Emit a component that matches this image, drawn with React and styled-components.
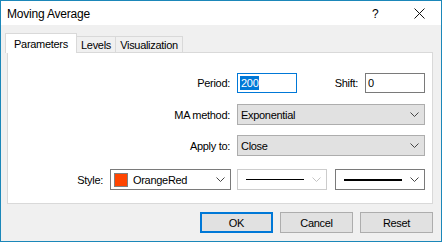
import React from "react";
import styled, { createGlobalStyle } from "styled-components";

const GlobalStyle = createGlobalStyle`
  html, body {
    margin: 0;
    padding: 0;
    background: #ffffff;
  }
  body {
    font-family: "Liberation Sans", Arial, sans-serif;
    font-size: 11px;
    color: #000000;
  }
`;

function Chevron({ disabled }) {
  return (
    <svg width="9" height="5" viewBox="0 0 9 5">
      <polyline
        points="0.5,0.5 4.5,4.5 8.5,0.5"
        fill="none"
        stroke={disabled ? "#c4c4c4" : "#444444"}
        strokeWidth="1"
      />
    </svg>
  );
}

function CloseGlyph() {
  return (
    <svg width="11" height="11" viewBox="0 0 11 11">
      <path d="M0.5 0.5 L10.5 10.5 M10.5 0.5 L0.5 10.5" stroke="#111" strokeWidth="1" />
    </svg>
  );
}

export default function App() {
  return (
    <>
      <GlobalStyle />
      <Window>
        <TitleBar>
          <Title>Moving Average</Title>
          <Help>?</Help>
          <CloseBox>
            <CloseGlyph />
          </CloseBox>
        </TitleBar>
        <Body>
          <Tabs>
            <Tab $active $w={72}>Parameters</Tab>
            <Tab $w={40}>Levels</Tab>
            <Tab $w={68}>Visualization</Tab>
          </Tabs>
          <Panel>
            <Row $top={0}>
              <Label>Period:</Label>
              <TextField $focused>
                <Selected>200</Selected>
              </TextField>
              <Label $w={61}>Shift:</Label>
              <TextField>0</TextField>
            </Row>
            <Row $top={11}>
              <Label>MA method:</Label>
              <Select $w={188}>
                <span>Exponential</span>
                <Chevron />
              </Select>
            </Row>
            <Row $top={10}>
              <Label>Apply to:</Label>
              <Select $w={188}>
                <span>Close</span>
                <Chevron />
              </Select>
            </Row>
            <Row $top={13}>
              <Label>Style:</Label>
              <WhiteSelect $w={121} $gap={6}>
                <Swatch />
                <SwatchText>OrangeRed</SwatchText>
                <Chevron />
              </WhiteSelect>
              <WhiteSelect $w={90} $disabled $gap={8}>
                <LineSample $thick={1} />
                <Chevron disabled />
              </WhiteSelect>
              <WhiteSelect $w={90}>
                <LineSample $thick={2} />
                <Chevron />
              </WhiteSelect>
            </Row>
          </Panel>
          <Buttons>
            <Button $default>OK</Button>
            <Button>Cancel</Button>
            <Button>Reset</Button>
          </Buttons>
        </Body>
      </Window>
    </>
  );
}

const Window = styled.div`
  box-sizing: border-box;
  width: 442px;
  height: 242px;
  border: 1px solid #1b87b9;
  background: #f0f0f0;
  display: flex;
  flex-direction: column;
  letter-spacing: -0.3px;
`;

const TitleBar = styled.div`
  height: 24px;
  background: #ffffff;
  display: flex;
  align-items: center;
  padding-left: 6px;
`;

const Title = styled.div`
  font-size: 12px;
  letter-spacing: -0.2px;
  flex: 1;
  margin-top: 1px;
`;

const Help = styled.div`
  font-size: 12px;
  width: 42px;
  margin-top: 1px;
`;

const CloseBox = styled.div`
  width: 27px;
  display: flex;
  align-items: center;
  margin-top: 1px;
`;

const Body = styled.div`
  display: flex;
  flex-direction: column;
  margin: 0 8px 0 6px;
`;

const Tabs = styled.div`
  display: flex;
  align-items: flex-end;
  height: 19px;
  margin-top: 8px;
  margin-left: -2px;
`;

const Tab = styled.div`
  box-sizing: border-box;
  width: ${(p) => p.$w}px;
  height: ${(p) => (p.$active ? 20 : 16)}px;
  margin-bottom: ${(p) => (p.$active ? -1 : 0)}px;
  margin-left: ${(p) => (p.$active ? 0 : -1)}px;
  background: ${(p) => (p.$active ? "#ffffff" : "#f0f0f0")};
  border: 1px solid #d9d9d9;
  border-bottom: none;
  position: relative;
  z-index: ${(p) => (p.$active ? 2 : 1)};
  display: flex;
  align-items: center;
  justify-content: center;
  padding-top: ${(p) => (p.$active ? 0 : 1)}px;
  &:first-child {
    margin-left: 0;
  }
`;

const Panel = styled.div`
  box-sizing: border-box;
  height: 152px;
  background: #ffffff;
  border: 1px solid #d9d9d9;
  display: flex;
  flex-direction: column;
  padding: 19px 7px 0 0;
`;

const Row = styled.div`
  display: flex;
  align-items: center;
  justify-content: flex-end;
  height: 21px;
  margin-top: ${(p) => p.$top}px;
`;

const Label = styled.div`
  ${(p) => (p.$w ? `width: ${p.$w}px;` : "")}
  text-align: right;
  margin-right: 7px;
`;

const TextField = styled.div`
  box-sizing: border-box;
  width: 60px;
  height: 20px;
  border: 1px solid ${(p) => (p.$focused ? "#0078d7" : "#7a7a7a")};
  background: #ffffff;
  display: flex;
  align-items: center;
  padding-left: 2px;
`;

const Selected = styled.span`
  background: #0078d7;
  color: #ffffff;
  line-height: 14px;
  padding: 0 1px;
`;

const Select = styled.div`
  box-sizing: border-box;
  width: ${(p) => p.$w}px;
  height: 21px;
  border: 1px solid #adadad;
  background: #e1e1e1;
  display: flex;
  align-items: center;
  justify-content: space-between;
  padding: 0 5px 0 3px;
`;

const WhiteSelect = styled.div`
  box-sizing: border-box;
  width: ${(p) => p.$w}px;
  height: 21px;
  border: 1px solid ${(p) => (p.$disabled ? "#cccccc" : "#7a7a7a")};
  background: #ffffff;
  display: flex;
  align-items: center;
  padding: 0 5px 0 3px;
  margin-right: ${(p) => p.$gap || 0}px;
`;

const Swatch = styled.div`
  box-sizing: border-box;
  width: 14px;
  height: 14px;
  background: #ff4500;
  border: 1px solid #808080;
`;

const SwatchText = styled.span`
  flex: 1;
  margin-left: 5px;
`;

const LineSample = styled.div`
  height: ${(p) => p.$thick}px;
  background: #000000;
  width: 58px;
  margin: 0 auto 0 5px;
`;

const Buttons = styled.div`
  display: flex;
  justify-content: flex-end;
  gap: 7px;
  margin-top: 8px;
`;

const Button = styled.div`
  box-sizing: border-box;
  width: 73px;
  height: 21px;
  background: #e1e1e1;
  border: ${(p) => (p.$default ? "2px solid #0078d7" : "1px solid #adadad")};
  display: flex;
  align-items: center;
  justify-content: center;
`;
